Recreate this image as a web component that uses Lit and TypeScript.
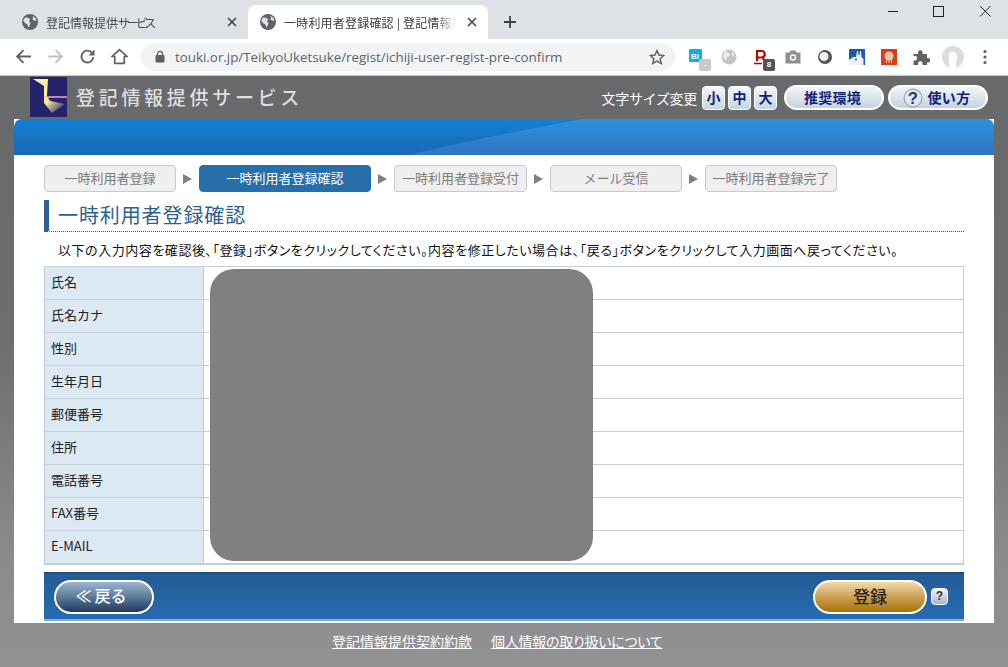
import { LitElement, html, css, svg } from 'lit';
import { customElement } from 'lit/decorators.js';

const globe = svg`<svg class="fav" viewBox="0 0 16 16"><circle cx="8" cy="8" r="8" fill="#5f6368"/><path d="M3 3.500l3.200.3 2 1.800-1.400 1.600 1.600 1.600-.6 2.600-1.400 2.400-.8-3-2.600-1.800-1.900-2.200zM10.500 1.800l3 2.200 1 3-2.400-.4-1.800-1.400.8-1.200z" fill="#dee1e6"/></svg>`;

const steps = [
  { label: '一時利用者登録', w: 132 },
  { label: '一時利用者登録確認', w: 172, active: true },
  { label: '一時利用者登録受付', w: 133 },
  { label: 'メール受信', w: 132 },
  { label: '一時利用者登録完了', w: 132 }
];

const rows = ['氏名', '氏名カナ', '性別', '生年月日', '郵便番号', '住所', '電話番号', 'FAX番号', 'E-MAIL'];

@customElement('app-root')
export class AppRoot extends LitElement {
  static styles = css`
    :host {
      display: block;
      width: 1008px;
      height: 667px;
      overflow: hidden;
      font-family: "Noto Sans CJK JP", "Noto Sans", sans-serif;
      color: #222;
    }
    * { box-sizing: border-box; }
    .tabstrip {
      height: 39px;
      background: #dee1e6;
      display: flex;
      padding: 5px 0 0 8px;
    }
    .tab {
      width: 240px;
      height: 34px;
      display: flex;
      align-items: center;
      padding: 0 8px 0 14px;
      font-size: 12px;
      color: #45484c;
      gap: 8px;
    }
    .tab.active {
      background: #fff;
      border-radius: 8px 8px 0 0;
      color: #3c4043;
      padding-left: 12px;
    }
    .fav { width: 16px; height: 16px; flex: none; }
    .tab-title {
      flex: 1;
      overflow: hidden;
      white-space: nowrap;
      font-feature-settings: "palt";
      -webkit-mask-image: linear-gradient(90deg, #000 88%, transparent);
      mask-image: linear-gradient(90deg, #000 88%, transparent);
    }
    .tab.active .tab-title { letter-spacing: .2px; }
    .kana { letter-spacing: -2.4px; }
    .tab-x { width: 16px; height: 16px; flex: none; }
    .newtab { width: 14px; height: 14px; margin: 10px 0 0 15px; }
    .winctl { margin-left: auto; display: flex; gap: 30px; padding: 0 15px 0 0; margin-top: -5px; }
    .winctl svg { width: 16px; height: 22px; }
    .toolbar {
      height: 37px;
      background: #fff;
      border-bottom: 1px solid #c8cacd;
      display: flex;
      align-items: center;
      padding: 0 0 1px 0;
    }
    .nav { display: flex; gap: 15px; padding-left: 15px; }
    .nav svg { width: 17px; height: 17px; }
    .omni {
      width: 534px;
      height: 28px;
      margin-left: 13px;
      background: #f1f3f4;
      border-radius: 14px;
      display: flex;
      align-items: center;
      padding: 0 10px 0 14px;
      font-family: "Open Sans", sans-serif;
      font-size: 13.35px;
      color: #5f6368;
    }
    .omni .lock { width: 10px; height: 13px; margin-right: 10px; flex: none; }
    .omni .url { flex: 1; white-space: nowrap; }
    .omni .star { width: 16px; height: 16px; }
    .exts { display: flex; margin-left: 6px; align-items: center; }
    .ext { width: 32px; height: 32px; display: flex; align-items: center; justify-content: center; position: relative; }
    .ext svg { width: 18px; height: 18px; }
    .ext svg.avatar { width: 22px; height: 22px; }
    .badge {
      position: absolute;
      left: 18px;
      top: 18px;
      width: 12px;
      height: 12px;
      border-radius: 2px;
      font: 700 8px/12px "Liberation Sans", sans-serif;
      text-align: center;
      color: #fff;
      background: #555;
    }
    .badge.off { background: #c8c8c8; }
    .page {
      height: 591px;
      background: linear-gradient(#68696b 0, #6d6e70 45%, #8a8a8c 80%, #929294 100%);
    }
    .head {
      height: 43px;
      display: flex;
      align-items: center;
      padding: 0 20px 0 30px;
    }
    .logo { width: 37px; height: 40px; flex: none; margin-bottom: 2px; }
    .sitename {
      margin: 0 0 2px 9px;
      font-size: 19px;
      font-weight: 500;
      letter-spacing: 3.7px;
      color: #dddedf;
      white-space: nowrap;
    }
    .sizes { margin-left: auto; display: flex; align-items: center; font-size: 14px; color: #fff; }
    .sizes .lab { margin-right: 5px; white-space: nowrap; letter-spacing: -.3px; }
    .sz {
      width: 23px;
      height: 24px;
      margin-right: 3px;
      border: 1px solid #fff;
      border-radius: 4px;
      background: linear-gradient(#f4f7fa, #c5d5e1);
      color: #12227a;
      font-size: 14px;
      font-weight: 700;
      line-height: 20px;
      text-align: center;
    }
    .pill {
      width: 100px;
      height: 25px;
      margin-left: 4px;
      padding: 0 3px 2px 0;
      border: 2px solid #fff;
      border-radius: 13px;
      background: linear-gradient(#f2f5f8, #c3d3df);
      color: #12227a;
      font-size: 14px;
      font-weight: 700;
      letter-spacing: .3px;
      display: flex;
      align-items: center;
      justify-content: center;
      gap: 5px;
    }
    .pill.first { margin-left: 4px; }
    .pill svg { width: 20px; height: 20px; margin-top: 2px; }
    .panel {
      margin: 0 14px;
      width: 980px;
      height: 504px;
      background: #fff;
    }
    .band {
      height: 36px;
      border-radius: 8px 8px 0 0;
      background: linear-gradient(#1380d5, #1a68b5);
      position: relative;
      overflow: hidden;
    }
    .band::after {
      content: '';
      position: absolute;
      inset: 0;
      background: linear-gradient(#2a92de, #3374bf);
      clip-path: polygon(393px 36px, 480px 17px, 569px 0, 980px 0, 980px 36px);
    }
    .inner { padding: 10px 30px 0 30px; }
    .steps { display: flex; align-items: center; height: 27px; font-size: 13px; }
    .step {
      height: 27px;
      padding-bottom: 2px;
      border: 1px solid #c9c9c9;
      border-radius: 4px;
      background: #efefef;
      color: #7b7b7b;
      display: flex;
      align-items: center;
      justify-content: center;
      white-space: nowrap;
    }
    .step.active { background: #266fa9; border-color: #266fa9; color: #fff; }
    .arrow {
      width: 23px;
      display: flex;
      justify-content: center;
    }
    .arrow i {
      width: 0;
      height: 0;
      border-left: 9px solid #808080;
      border-top: 5px solid transparent;
      border-bottom: 5px solid transparent;
    }
    .title {
      margin-top: 8px;
      height: 32px;
      border-left: 5px solid #2f5f95;
      border-bottom: 1px dotted #2f5f95;
      padding-left: 9px;
      font-size: 20px;
      line-height: 29px;
      letter-spacing: .9px;
      color: #2f5f95;
      white-space: nowrap;
    }
    .lead {
      height: 34px;
      padding-left: 14px;
      font-size: 13px;
      line-height: 35px;
      font-feature-settings: "palt";
      letter-spacing: .54px;
      color: #111;
      white-space: nowrap;
    }
    .table {
      position: relative;
      border: 1px solid #c3ced8;
      font-size: 13px;
    }
    .row { display: flex; height: 33px; border-bottom: 1px solid #c3ced8; }
    .row:last-of-type { height: 32px; border-bottom: 0; }
    .th {
      width: 159px;
      background: #dce8f2;
      border-right: 1px solid #bccdde;
      padding-left: 6px;
      line-height: 30px;
      color: #222;
    }
    .redact {
      position: absolute;
      left: 165px;
      top: 2px;
      bottom: 3px;
      width: 383px;
      background: #808080;
      border-radius: 24px;
    }
    .actions {
      margin-top: 7px;
      height: 49px;
      border-top: 2px solid #1f4f7f;
      border-bottom: 2px solid #7fb2d8;
      background: linear-gradient(#245c94, #266bb2);
      display: flex;
      align-items: center;
      padding: 0 16px 0 10px;
    }
    .back {
      width: 100px;
      height: 34px;
      padding: 0 6px 3px 0;
      border: 2px solid #fff;
      border-radius: 17px;
      background: linear-gradient(#9db5cf, #5b7a9b 50%, #1e3a5c);
      color: #fff;
      font-size: 16px;
      font-weight: 500;
      display: flex;
      align-items: center;
      justify-content: center;
      gap: 3px;
    }
    .reg {
      margin-left: auto;
      width: 114px;
      height: 34px;
      padding-bottom: 3px;
      border: 2px solid #fff;
      border-radius: 17px;
      background: linear-gradient(#f3dba9, #c79a4c 55%, #a97308);
      color: #2a2212;
      font-size: 17px;
      font-weight: 500;
      display: flex;
      align-items: center;
      justify-content: center;
    }
    .help {
      margin-left: 4px;
      width: 17px;
      height: 17px;
      border: 1px solid #fff;
      border-radius: 4px;
      background: linear-gradient(#f2f4f8, #a9b4cc);
      color: #333;
      font: 700 12px/15px "Liberation Sans", sans-serif;
      text-align: center;
    }
    .foot {
      display: flex;
      gap: 19px;
      padding: 8px 0 0 332px;
      font-size: 14px;
    }
    .foot a { color: #fff; text-decoration: underline; white-space: nowrap; }
    .foot a.tight { font-feature-settings: "palt"; letter-spacing: -.25px; }
  `;

  private tabClose() {
    return svg`<svg class="tab-x" viewBox="0 0 16 16"><path d="M4 4l8 8M12 4l-8 8" stroke="#45484c" stroke-width="1.7"/></svg>`;
  }

  render() {
    return html`
      <div class="tabstrip">
        <div class="tab">${globe}<div class="tab-title">登記情報提供<span class="kana">サービス</span></div>${this.tabClose()}</div>
        <div class="tab active">${globe}<div class="tab-title">一時利用者登録確認 | 登記情報提供サービス</div>${this.tabClose()}</div>
        <svg class="newtab" viewBox="0 0 14 14"><path d="M7 1v12M1 7h12" stroke="#3c4043" stroke-width="1.8"/></svg>
        <div class="winctl">
          <svg viewBox="0 0 16 22"><path d="M3 11.500h10" stroke="#222"/></svg>
          <svg viewBox="0 0 16 22"><rect x="2.500" y="6.500" width="10" height="10" fill="none" stroke="#222"/></svg>
          <svg viewBox="0 0 16 22"><path d="M3 6l10.500 10.500M13.500 6L3 16.500" stroke="#222"/></svg>
        </div>
      </div>
      <div class="toolbar">
        <div class="nav">
          <svg viewBox="0 0 16 16"><path d="M15 8H2M8 2L2 8l6 6" fill="none" stroke="#5f6368" stroke-width="1.8"/></svg>
          <svg viewBox="0 0 16 16"><path d="M1 8h13M8 2l6 6-6 6" fill="none" stroke="#bdc1c6" stroke-width="1.8"/></svg>
          <svg viewBox="0 0 16 16"><path d="M13.500 8.500a5.600 5.600 0 1 1-1.600-4.400" fill="none" stroke="#5f6368" stroke-width="1.8"/><path d="M14.500 1.500v5.500H9z" fill="#5f6368"/></svg>
          <svg viewBox="0 0 16 16"><path d="M8 1.500L1 8h2.500v6.500h9V8H15z" fill="none" stroke="#5f6368" stroke-width="1.600"/></svg>
        </div>
        <div class="omni">
          <svg class="lock" viewBox="0 0 10 13"><path d="M2.500 5.500V3.800a2.500 2.500 0 0 1 5 0v1.700" fill="none" stroke="#5f6368" stroke-width="1.300"/><rect x="0.500" y="5" width="9" height="7.500" rx="1" fill="#5f6368"/></svg>
          <span class="url">touki.or.jp/TeikyoUketsuke/regist/ichiji-user-regist-pre-confirm</span>
          <svg class="star" viewBox="0 0 16 16"><path d="M8 1.600l2 4.400 4.700.5-3.500 3.200 1 4.700L8 12l-4.200 2.400 1-4.700L1.300 6.500 6 6z" fill="none" stroke="#5f6368" stroke-width="1.500"/></svg>
        </div>
        <div class="exts">
          <div class="ext"><svg viewBox="0 0 18 18"><rect x="1" y="1" width="13" height="13" rx="1" fill="#12aee8"/><text x="3" y="11" font-size="8" font-weight="700" fill="#fff" font-family="Liberation Sans">Bl</text></svg><span class="badge off">-</span></div>
          <div class="ext"><svg viewBox="0 0 18 18"><circle cx="9" cy="9" r="7.500" fill="#c4c4c4"/><path d="M5 3l4 2 1 3-3 1-1 4-3-4zM12 3l3 4-3 1z" fill="#ececec"/></svg></div>
          <div class="ext"><svg viewBox="0 0 18 18"><path d="M5 13V3h4.500a3.200 3.200 0 0 1 .8 6.300L13 13M5 9.500h4" fill="none" stroke="#bf0000" stroke-width="2.200"/><path d="M2 15.500h8" stroke="#bf0000" stroke-width="1.500"/></svg><span class="badge">8</span></div>
          <div class="ext"><svg viewBox="0 0 18 18"><path d="M1.500 4.500h4l1-2h5l1 2h4v11h-15z" fill="#8f8f8f"/><circle cx="9" cy="9.500" r="3.200" fill="#fff"/><circle cx="9" cy="9.500" r="1.800" fill="#8f8f8f"/></svg></div>
          <div class="ext"><svg viewBox="0 0 18 18"><circle cx="9" cy="9" r="7" fill="#555"/><circle cx="8" cy="8.500" r="4.500" fill="#f2f2f2"/><path d="M3.500 10a5 5 0 0 0 9 1a5 4 0 0 1-9-1z" fill="#aaa"/></svg></div>
          <div class="ext"><svg viewBox="0 0 18 18"><rect width="16" height="16" x="1" y="1" fill="#1d5bb5"/><path d="M1 12l4-3h3l1-6h1l.5 4h1l.5-4h1l.500 6 2 2v6H1z" fill="#eef"/><circle cx="8" cy="11.500" r="1" fill="#1d5bb5"/></svg></div>
          <div class="ext"><svg viewBox="0 0 18 18"><rect width="16" height="16" x="1" y="1" fill="#e03a1c"/><circle cx="9" cy="8" r="4.500" fill="#f4c6b0"/><path d="M6 12h1v3H6zM8.500 12h1v3h-1zM11 12h1v3h-1z" fill="#f4c6b0"/></svg></div>
          <div class="ext"><svg viewBox="0 0 18 18"><path d="M1.500 6H6V4.500a2.300 2.300 0 0 1 4.600 0V6H15v4h1a2.300 2.300 0 0 1 0 4.600h-1V17H10.500v-1.500a2.200 2.200 0 0 0-4.400 0V17H1.500v-4.500H3a2.200 2.200 0 0 0 0-4.400H1.500z" fill="#5f6368"/></svg></div>
          <div class="ext"><svg class="avatar" viewBox="0 0 22 22"><circle cx="11" cy="11" r="11" fill="#dcdcdc"/><path d="M7 22V10a4 4 0 0 1 8 0c0 4-1 5-1 12z" fill="#fff"/></svg></div>
          <div class="ext"><svg viewBox="0 0 18 18"><circle cx="9" cy="3.500" r="1.600" fill="#5f6368"/><circle cx="9" cy="9" r="1.600" fill="#5f6368"/><circle cx="9" cy="14.500" r="1.600" fill="#5f6368"/></svg></div>
        </div>
      </div>
      <div class="page">
        <div class="head">
          <svg class="logo" viewBox="0 0 37 40">
            <defs><linearGradient id="lg" x1="0" y1="0" x2="0.900" y2="1"><stop offset="0" stop-color="#fff7a0"/><stop offset="0.600" stop-color="#f4ec9a"/><stop offset="1" stop-color="#25236b"/></linearGradient></defs>
            <rect width="37" height="40" fill="#25236b"/>
            <path d="M3 2h15l-1 17 3 5 15 3-13 9-8-10V9z" fill="url(#lg)"/>
            <path d="M15 20h22" stroke="#f3a8c0" stroke-width="1.500"/>
          </svg>
          <div class="sitename">登記情報提供サービス</div>
          <div class="sizes">
            <span class="lab">文字サイズ変更</span>
            <div class="sz">小</div><div class="sz">中</div><div class="sz">大</div>
            <div class="pill first">推奨環境</div>
            <div class="pill">
              <svg viewBox="0 0 18 18"><circle cx="9" cy="9" r="8" fill="#dfe8f0" stroke="#8fa6bc"/><text x="9" y="14.500" text-anchor="middle" font-size="15" font-weight="700" fill="#1d3a80" font-family="Liberation Sans">?</text></svg>使い方
            </div>
          </div>
        </div>
        <div class="panel">
          <div class="band"></div>
          <div class="inner">
            <div class="steps">
              ${steps.map((s, i) => html`
                ${i ? html`<div class="arrow"><i></i></div>` : ''}
                <div class="step ${s.active ? 'active' : ''}" style="width:${s.w}px">${s.label}</div>
              `)}
            </div>
            <div class="title">一時利用者登録確認</div>
            <div class="lead">以下の入力内容を確認後、「登録」ボタンをクリックしてください。内容を修正したい場合は、「戻る」ボタンをクリックして入力画面へ戻ってください。</div>
            <div class="table">
              ${rows.map((r) => html`<div class="row"><div class="th">${r}</div></div>`)}
              <div class="redact"></div>
            </div>
            <div class="actions">
              <div class="back"><span>≪</span><span>戻る</span></div>
              <div class="reg">登録</div>
              <div class="help">?</div>
            </div>
          </div>
        </div>
        <div class="foot">
          <a>登記情報提供契約約款</a>
          <a class="tight">個人情報の取り扱いについて</a>
        </div>
      </div>
    `;
  }
}
